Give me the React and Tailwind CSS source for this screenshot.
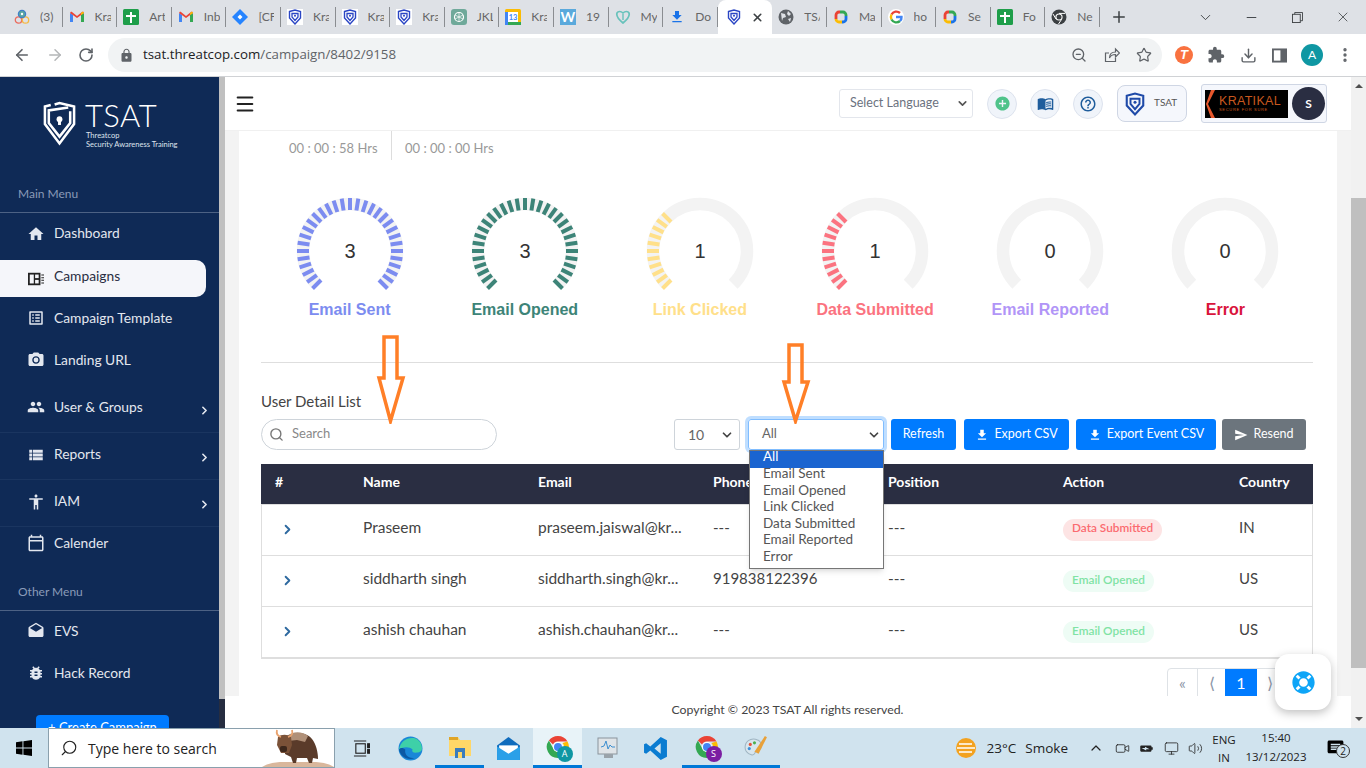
import React from 'react';
import { ArrowLeft, ArrowRight, RotateCw, ZoomOut, Star, Download, EllipsisVertical, Plus, X, ChevronDown, Minus, Search, ChevronRight, Volume2, Monitor, Video, ChevronUp, Menu } from 'lucide-react';
import { MdLock, MdExtension, MdHome, MdListAlt, MdPhotoCamera, MdPeople, MdViewList, MdAccessibility, MdOutlineCalendarToday, MdDrafts, MdBugReport, MdMenuBook, MdFileDownload, MdSend, MdAddCircle, MdOutlineHelpOutline, MdBatteryChargingFull, MdMessage } from 'react-icons/md';
import { FaLifeRing } from 'react-icons/fa';

const Gmail = () => (
  <svg viewBox="0 0 16 16" className="w-4 h-4">
    <path d="M1 13V4l3 2v7z" fill="#4285f4" />
    <path d="M15 13V4l-3 2v7z" fill="#34a853" />
    <path d="M1 4l7 5 7-5-1-1.500-1 .5-5 4-5-4-1-.5z" fill="#ea4335" />
    <path d="M12 6l3-2-1-1.500-2 1.500z" fill="#fbbc04" />
  </svg>
);
const Sheet = () => (
  <svg viewBox="0 0 16 16" className="w-4 h-4">
    <rect width="16" height="16" rx="1.500" fill="#1e9e4a" />
    <path d="M7 3h2v3h4v2H9v6H7V8H3V6h4z" fill="#fff" />
  </svg>
);
const Jira = () => (
  <svg viewBox="0 0 16 16" className="w-4 h-4">
    <path d="M8 0l8 8-8 8-8-8z" fill="#2684ff" />
    <path d="M8 5.500L10.500 8 8 10.500 5.500 8z" fill="#fff" />
  </svg>
);
const Shield = ({ color = '#2b46c4', cls = 'w-4 h-4' }) => (
  <svg viewBox="0 0 16 16" className={cls}>
    <path d="M2.500 2.500L8 1l5.500 1.500V9L8 15 2.500 9z" fill="none" stroke={color} strokeWidth="1.400" />
    <path d="M5 4.500h6V8l-3 3.500L5 8z" fill="none" stroke={color} strokeWidth="1.300" />
    <circle cx="8" cy="6.800" r="1" fill={color} />
  </svg>
);
const ShieldTab = () => (
  <div className="w-4 h-4 bg-white flex items-center justify-center"><Shield /></div>
);
const Robot = () => (
  <svg viewBox="0 0 16 16" className="w-4 h-4">
    <rect width="16" height="16" rx="3" fill="#6fa99a" />
    <circle cx="8" cy="8" r="4.500" fill="none" stroke="#fff" strokeWidth="1.200" />
    <path d="M8 3.500v9M4 6l8 4M12 6l-8 4" stroke="#fff" strokeWidth=".7" />
  </svg>
);
const Cal = () => (
  <svg viewBox="0 0 16 16" className="w-4 h-4">
    <rect width="16" height="16" rx="1.500" fill="#fbbc04" />
    <rect x="0" y="3" width="3" height="13" fill="#4285f4" />
    <rect x="3" y="3" width="10" height="10" fill="#fff" />
    <rect x="3" y="13" width="13" height="3" fill="#34a853" />
    <text x="8" y="11" fontSize="7.500" textAnchor="middle" fill="#4285f4" fontWeight="700">13</text>
  </svg>
);
const Word = () => (
  <div className="w-4 h-4 bg-[#5aa9dc] text-white text-[14px] leading-4 text-center font-bold">W</div>
);
const Green = () => (
  <svg viewBox="0 0 16 16" className="w-4 h-4">
    <path d="M8 14C3 10 1 7 2 4c1-2 4-2 6 0 2-2 5-2 6 0 1 3-1 6-6 10z" fill="none" stroke="#68c2bb" strokeWidth="1.700" />
    <path d="M8 11V5" stroke="#68c2bb" strokeWidth="1.400" />
  </svg>
);
const Dl = () => <MdFileDownload className="w-4 h-4 text-[#1a73e8]" />;
const Globe = () => (
  <svg viewBox="0 0 16 16" className="w-4 h-4">
    <circle cx="8" cy="8" r="7.500" fill="#5f6368" />
    <path d="M3 4l4 1 1 3-3 1-1 3zM10 2l3 3-2 2-2-2zM10 10l3-1-1 4z" fill="#dee1e6" />
  </svg>
);
const RingApp = () => (
  <svg viewBox="0 0 16 16" className="w-4 h-4" fill="none" strokeWidth="2.800">
    <path d="M3 10V6a3 3 0 0 1 3-3h1" stroke="#ea4335" />
    <path d="M7 3h3a3 3 0 0 1 3 3v1" stroke="#34a853" />
    <path d="M13 7v3a3 3 0 0 1-3 3H9" stroke="#1a73e8" />
    <path d="M9 13H6a3 3 0 0 1-3-3" stroke="#fbbc04" />
  </svg>
);
const GoogleG = () => (
  <div className="w-4 h-4 rounded-full bg-white flex items-center justify-center">
    <svg viewBox="0 0 16 16" className="w-4 h-4" fill="none" strokeWidth="2.400">
      <path d="M3.500 5.500A5.500 5.500 0 0 1 12 4" stroke="#ea4335" />
      <path d="M3.500 5.500a5.500 5.500 0 0 0 0 5" stroke="#fbbc04" />
      <path d="M3.500 10.500A5.500 5.500 0 0 0 12 12" stroke="#34a853" />
      <path d="M12 12a5 5 0 0 0 1.500-4H8" stroke="#4285f4" />
    </svg>
  </div>
);
const ChromeMono = () => (
  <svg viewBox="0 0 16 16" className="w-4 h-4">
    <circle cx="8" cy="8" r="7.500" fill="#3c4043" />
    <circle cx="8" cy="8" r="3.600" fill="#fff" />
    <circle cx="8" cy="8" r="2.500" fill="#3c4043" />
    <path d="M8 4.400h6M5 10L2 5M10.500 10.500L7.500 15" stroke="#fff" strokeWidth="1" />
  </svg>
);
const Hub = () => (
  <svg viewBox="0 0 16 16" className="w-4 h-4" fill="none" strokeWidth="1.300">
    <circle cx="4.500" cy="11" r="3.200" stroke="#ea6b5d" />
    <circle cx="11.500" cy="11" r="3.200" stroke="#f5b942" />
    <circle cx="8" cy="5" r="3.600" fill="#5aa7a0" stroke="#3f7fc9" />
    <circle cx="8" cy="5" r="1.200" fill="#fff" />
  </svg>
);

const tabs = [
  [Hub, '(3)'], [Gmail, 'Kra'], [Sheet, 'Art'], [Gmail, 'Inb'], [Jira, '[CF'],
  [ShieldTab, 'Kra'], [ShieldTab, 'Kra'], [ShieldTab, 'Kra'], [Robot, 'JKL'], [Cal, 'Kra'],
  [Word, '19'], [Green, 'My'], [Dl, 'Do'], null,
  [Globe, 'TS/'], [RingApp, 'Ma'], [GoogleG, 'ho'], [RingApp, 'Se'], [Sheet, 'Fo'], [ChromeMono, 'Ne'],
];

const TabStrip = () => (
  <div className="h-[34px] bg-[#dee1e6] flex items-center pl-[8px] text-[12px] text-[#666] shrink-0">
    {tabs.map((t, i) => {
      if (!t) {
        return (
          <div key={i} className="w-[54.6px] h-[34px] bg-white rounded-t-lg flex items-center pl-[8px] shrink-0">
            <Shield color="#2b46c4" />
            <X size={13} strokeWidth={3} className="ml-[9px] text-[#3c4043]" />
          </div>
        );
      }
      const [Icon, label] = t;
      return (
        <div key={i} className="w-[54.6px] h-[20px] flex items-center pl-[6px] border-r border-[#8a8d91] shrink-0 overflow-hidden">
          <div className="shrink-0"><Icon /></div>
          <span className="ml-[10px] w-[16px] overflow-hidden whitespace-nowrap">{label}</span>
        </div>
      );
    })}
    <Plus size={18} strokeWidth={2} className="ml-[10px] text-[#3c4043] shrink-0" />
    <div className="ml-auto flex h-full text-[#3c4043]">
      <div className="w-[46px] flex items-center justify-center"><ChevronDown size={17} strokeWidth={1.300} /></div>
      <div className="w-[46px] flex items-center justify-center"><Minus size={15} strokeWidth={1.500} /></div>
      <div className="w-[46px] flex items-center justify-center">
        <svg viewBox="0 0 12 12" className="w-[11px] h-[11px]" fill="none" stroke="currentColor"><rect x=".5" y="2.500" width="8.500" height="9" /><path d="M3 2.500V.5h8.500v9H9" /></svg>
      </div>
      <div className="w-[46px] flex items-center justify-center"><X size={16} strokeWidth={1.200} /></div>
    </div>
  </div>
);

const AddressBar = () => (
  <div className="h-[43px] bg-white flex items-center border-b border-[#d0d2d5] text-[#5f6368] shrink-0">
    <ArrowLeft size={18} strokeWidth={2.200} className="ml-[13px]" />
    <ArrowRight size={18} strokeWidth={2} className="ml-[15px] text-[#b4b6b8]" />
    <RotateCw size={16} strokeWidth={2.400} className="ml-[14px]" />
    <div className="ml-[14px] w-[1054px] h-[34px] rounded-full bg-[#f1f3f4] flex items-center pl-[11px] pr-[10px]">
      <MdLock size={15} />
      <span className="ml-[9px] text-[13.300px] [font-family:'Open_Sans',sans-serif] text-[#5f6368]"><span className="text-[#202124]">tsat.threatcop.com</span>/campaign/8402/9158</span>
      <ZoomOut size={16} className="ml-auto mr-[17px]" />
      <svg viewBox="0 0 16 16" className="w-4 h-4 mr-[16px]" fill="none" stroke="currentColor" strokeWidth="1.200"><path d="M5 6H1.500v8.500h10V11" /><path d="M5.500 11c0-4 2.500-6 6-6V2l4 4-4 4V7.500c-3 0-5 1-6 3.500z" /></svg>
      <Star size={16} strokeWidth={1.800} />
    </div>
    <div className="ml-[13px] w-[18px] h-[18px] rounded-full bg-[#f97240] text-white text-[13px] leading-[18px] text-center font-bold italic [font-family:'Liberation_Sans',sans-serif]">T</div>
    <MdExtension size={18} className="ml-[14px]" />
    <Download size={17} strokeWidth={2} className="ml-[15px]" />
    <svg viewBox="0 0 16 16" className="w-[15px] h-[15px] ml-[15px]"><rect x="1" y="1.500" width="14" height="13" fill="none" stroke="#5f6368" strokeWidth="2" /><rect x="9" y="1.500" width="6" height="13" fill="#5f6368" /></svg>
    <div className="ml-[14px] w-[22px] h-[22px] rounded-full bg-[#0f97a3] text-white text-[12px] leading-[22px] text-center">A</div>
    <EllipsisVertical size={18} strokeWidth={2.500} className="ml-[13px]" />
  </div>
);

const menuCls = 'flex items-center pl-[27px] text-[#e3e7ef] shrink-0';

const MenuItem = ({ icon: Icon, label, cls, arrow }) => (
  <div className={`${menuCls} ${cls}`}>
    <Icon size={18} className="w-[18px] shrink-0" />
    <span className="ml-[9px]">{label}</span>
    {arrow && <ChevronRight size={13} strokeWidth={3} className="ml-auto mr-[8px] mt-[6px]" />}
  </div>
);

const CampaignIcon = () => (
  <svg viewBox="0 0 18 14" className="w-[16px] h-[14px] ml-[1px]">
    <rect x="0" y="0" width="14" height="14" fill="#222" />
    <rect x="2" y="2" width="4.500" height="10" fill="#f5f6fa" />
    <rect x="8" y="2" width="4" height="4" fill="#f5f6fa" />
    <rect x="8" y="8" width="4" height="4" fill="#f5f6fa" />
    <path d="M15 2.500h3M15 5.500h3M15 8.500h3M15 11.500h3" stroke="#222" strokeWidth="1.200" />
  </svg>
);

const Sidebar = () => (
  <div className="w-[219px] h-full bg-[#0f2a56] overflow-hidden shrink-0 text-[13.800px] flex flex-col">
    <div className="h-[100px] shrink-0 flex pl-[42px] pt-[24px]">
      <svg viewBox="0 0 36 46" className="w-[35px] h-[46px]" fill="none" stroke="#fff">
        <path d="M13 3L18 1.500 33 5v18L18 43 3 23V5l6-1.500" strokeWidth="2.600" />
        <path d="M29 10v12L18 36 7 22V9l20-3" strokeWidth="2.600" />
        <circle cx="18" cy="18" r="3" fill="#fff" stroke="none" />
        <rect x="16.500" y="19" width="3" height="5" fill="#fff" stroke="none" />
      </svg>
      <div className="ml-[8px] text-white">
        <div className="text-[31px] leading-[30px] font-light tracking-[0.5px] -mt-[1px]">TSAT</div>
        <div className="text-[7.500px] leading-[8.500px] text-[#dfe4ee] mt-[2px] ml-[1px]">Threatcop</div>
        <div className="text-[7.500px] leading-[8.500px] text-[#dfe4ee] ml-[1px] whitespace-nowrap">Security Awareness Training</div>
      </div>
    </div>
    <div className="h-[36px] shrink-0 border-b border-[#4d6284] pl-[18px] pt-[8px] text-[12px] text-[#8a9bb8]">Main Menu</div>
    <MenuItem icon={MdHome} label="Dashboard" cls="h-[41px]" />
    <div className="mt-[6px] h-[37px] bg-[#f5f6fa] rounded-r-[10px] w-[206px] flex items-center pl-[27px] text-[#2a2e42] shrink-0">
      <CampaignIcon />
      <span className="ml-[10px] -mt-[4px]">Campaigns</span>
    </div>
    <MenuItem icon={MdListAlt} label="Campaign Template" cls="h-[42px]" />
    <MenuItem icon={MdPhotoCamera} label="Landing URL" cls="h-[42px]" />
    <MenuItem icon={MdPeople} label="User & Groups" cls="h-[52px] border-b border-[#1a3560] pt-[1px]" arrow />
    <MenuItem icon={MdViewList} label="Reports" cls="h-[47px] border-b border-[#1a3560] pb-[3px]" arrow />
    <MenuItem icon={MdAccessibility} label="IAM" cls="h-[47px] border-b border-[#1a3560] pb-[3px]" arrow />
    <MenuItem icon={MdOutlineCalendarToday} label="Calender" cls="h-[34px] pb-[2px]" />
    <div className="h-[50px] shrink-0 border-b border-[#4d6284] pl-[18px] pt-[22px] text-[12px] text-[#8a9bb8]">Other Menu</div>
    <MenuItem icon={MdDrafts} label="EVS" cls="h-[42px] pb-[2px]" />
    <MenuItem icon={MdBugReport} label="Hack Record" cls="h-[42px] pb-[2px]" />
    <div className="mt-[20px] ml-[36px] w-[133px] h-[36px] shrink-0 bg-[#007bff] rounded-t text-white text-center pt-[3px] leading-[18px] text-[13px]">+ Create Campaign</div>
  </div>
);

const Gauge = ({ value, label, color, filled }) => {
  const ticks = [];
  for (let i = 0; i < filled; i++) {
    const a = ((-135 + i * 9) * Math.PI) / 180;
    const s = Math.sin(a);
    const c = Math.cos(a);
    ticks.push(<line key={i} x1={60 + 41 * s} y1={60 - 41 * c} x2={60 + 53 * s} y2={60 - 53 * c} stroke={color} strokeWidth="4" />);
  }
  return (
    <div className="flex flex-col items-center [font-family:'Liberation_Sans',sans-serif]">
      <svg viewBox="0 0 120 104" className="w-[120px] h-[104px]">
        <path d="M26.77 93.23 A47 47 0 1 1 93.23 93.23" fill="none" stroke="#f3f3f3" strokeWidth="12.500" />
        {ticks}
        <text x="60" y="67" textAnchor="middle" fontSize="20" fill="#333">{value}</text>
      </svg>
      <div className="mt-[3px] text-[16px] leading-[24px] font-bold whitespace-nowrap" style={{ color }}>{label}</div>
    </div>
  );
};

const gauges = [
  { value: 3, label: 'Email Sent', color: '#7c8cf0', filled: 31 },
  { value: 3, label: 'Email Opened', color: '#3d8478', filled: 31 },
  { value: 1, label: 'Link Clicked', color: '#ffe08a', filled: 11 },
  { value: 1, label: 'Data Submitted', color: '#fb7380', filled: 11 },
  { value: 0, label: 'Email Reported', color: '#b195f7', filled: 0 },
  { value: 0, label: 'Error', color: '#d9143c', filled: 0 },
];

const rows = [
  { name: 'Praseem', email: 'praseem.jaiswal@kr...', phone: '---', action: 'Data Submitted', country: 'IN' },
  { name: 'siddharth singh', email: 'siddharth.singh@kr...', phone: '919838122396', action: 'Email Opened', country: 'US' },
  { name: 'ashish chauhan', email: 'ashish.chauhan@kr...', phone: '---', action: 'Email Opened', country: 'US' },
];

const gridCols = 'grid grid-cols-[88px_175px_175px_175px_175px_176px_88px]';
const options = ['Email Sent', 'Email Opened', 'Link Clicked', 'Data Submitted', 'Email Reported', 'Error'];

const Btn = ({ icon: Icon, label, cls }) => (
  <div className={`h-[31px] rounded-[3px] text-white text-[12.500px] flex items-center justify-center shrink-0 ${cls}`}>
    {Icon && <Icon size={14} className="mr-[5px]" />}
    {label}
  </div>
);

const Toolbar = () => (
  <div className="mt-[8px] flex items-center pr-[7px] text-[13px]">
    <div className="w-[236px] h-[31px] border border-[#ced4da] rounded-full flex items-center pl-[7px] text-[#888]">
      <Search size={15} strokeWidth={2.200} className="text-[#777]" />
      <span className="ml-[8px] pb-[1px]">Search</span>
    </div>
    <div className="ml-auto w-[66px] h-[31px] border border-[#ced4da] rounded-[3px] flex items-center justify-between pl-[13px] pr-[5px] text-[#666] text-[14px]">
      10
      <ChevronDown size={14} strokeWidth={3} className="text-[#444]" />
    </div>
    <div className="relative ml-[8px] w-[136px] h-[31px] border border-[#80bdff] ring-[3px] ring-[#bfdeff] rounded-[3px] flex items-center justify-between pl-[13px] pr-[2px] text-[#666]">
      <span className="pb-[1px]">All</span>
      <ChevronDown size={14} strokeWidth={3} className="text-[#444]" />
      <div className="absolute z-20 left-0 top-[30px] w-[135px] h-[119px] bg-white border border-[#767676] shadow-md text-[13.500px] leading-[16.600px] text-[#555]">
        <div className="bg-[#1a64d0] text-white pl-[13px] h-[17px] leading-[10px]">All</div>
        <div className="-mt-[3px]">
          {options.map((o) => <div key={o} className="pl-[13px]">{o}</div>)}
        </div>
      </div>
    </div>
    <Btn label="Refresh" cls="ml-[7px] w-[65px] bg-[#007bff]" />
    <Btn icon={MdFileDownload} label="Export CSV" cls="ml-[8px] w-[105px] bg-[#007bff]" />
    <Btn icon={MdFileDownload} label="Export Event CSV" cls="ml-[7px] w-[140px] bg-[#007bff]" />
    <Btn icon={MdSend} label="Resend" cls="ml-[6px] w-[84px] bg-[#6c757d]" />
  </div>
);

const UserTable = () => (
  <div className="mt-[14px] border-x border-b-2 border-[#dedede] text-[15.500px] text-[#444]">
    <div className={`${gridCols} -mx-px h-[41px] bg-[#2a2e42] text-white text-[14px] font-bold items-center border-b border-[#dedede]`}>
      {['#', 'Name', 'Email', 'Phone', 'Position', 'Action', 'Country'].map((h) => (
        <div key={h} className="pl-[14px] pb-[5px]">{h}</div>
      ))}
    </div>
    {rows.map((r, i) => (
      <div key={r.name} className={`${gridCols} -mx-px items-center ${i < 2 ? 'h-[51px] border-b border-[#dedede]' : 'h-[50px]'}`}>
        <div className="pl-[19px] pb-[2px]"><ChevronRight size={15} strokeWidth={3} className="text-[#2f6aa0]" /></div>
        <div className="pl-[14px] pb-[5px]">{r.name}</div>
        <div className="pl-[14px] pb-[5px] whitespace-nowrap">{r.email}</div>
        <div className="pl-[14px] pb-[5px] text-[15px]">{r.phone}</div>
        <div className="pl-[14px] pb-[5px]">---</div>
        <div className="pl-[14px] pb-[4px]">
          {r.action === 'Data Submitted'
            ? <span className="inline-block h-[22px] px-[9px] rounded-full bg-[#fde4e4] text-[#fb6b70] text-[11.800px] font-semibold leading-[18px]">{r.action}</span>
            : <span className="inline-block h-[22px] px-[9px] rounded-full bg-[#eefcf5] text-[#7fe3a4] text-[11.800px] font-semibold leading-[20px]">{r.action}</span>}
        </div>
        <div className="pl-[14px] pb-[5px] text-[15px]">{r.country}</div>
      </div>
    ))}
  </div>
);

const Pager = () => (
  <div className="mt-[9px] flex justify-end pr-[29px] h-[38px] text-[#8a94a6]">
    <div className="flex h-[38px] border border-[#dee2e6] rounded-l">
      <div className="w-[30px] flex items-center justify-center border-r border-[#dee2e6] pb-[8px]">«</div>
      <div className="w-[27px] flex items-center justify-center pb-[8px]">⟨</div>
      <div className="w-[32px] bg-[#007bff] text-white text-[16px] flex items-center justify-center pb-[8px]">1</div>
      <div className="w-[26px] flex items-center justify-center pb-[8px]">⟩</div>
    </div>
  </div>
);

const Main = () => (
  <div className="relative w-[1126px] h-full flex flex-col shrink-0 bg-white text-[#444]">
    <div className="h-[54px] shrink-0 bg-white border-b border-[#f0f0f0] flex items-center pl-[9px] pr-[24px]">
      <Menu size={22} strokeWidth={2.200} className="text-[#222]" />
      <div className="ml-auto w-[134px] h-[29px] border border-[#e3e6ec] rounded-[3px] flex items-center justify-between pl-[10px] pr-[3px] text-[12.500px] text-[#6b7280]">
        Select Language
        <ChevronDown size={13} strokeWidth={3} className="text-[#555]" />
      </div>
      <div className="ml-[14px] w-[30px] h-[30px] rounded-full bg-[#f0f4fa] border border-[#dde3ee] flex items-center justify-center"><MdAddCircle size={17} className="text-[#4fc38a]" /></div>
      <div className="ml-[13px] w-[30px] h-[30px] rounded-full bg-[#f0f4fa] border border-[#dde3ee] flex items-center justify-center"><MdMenuBook size={17} className="text-[#1f5d9c]" /></div>
      <div className="ml-[13px] w-[30px] h-[30px] rounded-full bg-[#f0f4fa] border border-[#dde3ee] flex items-center justify-center"><MdOutlineHelpOutline size={18} className="text-[#1f5d9c]" /></div>
      <div className="ml-[14px] w-[70px] h-[37px] rounded-lg bg-[#f5f7fc] border border-[#cfd6e4] flex items-center pl-[5px] text-[10px] text-[#555]">
        <Shield color="#1f4aa8" cls="w-[24px] h-[28px]" />
        <span className="ml-[7px] -mt-[3px]">TSAT</span>
      </div>
      <div className="ml-[14px] w-[126px] h-[39px] rounded-[3px] bg-[#f5f7fc] border border-[#cfd6e4] flex items-center pl-[3px]">
        <div className="w-[83px] h-[28px] bg-black flex items-center overflow-hidden">
          <svg viewBox="0 0 10 28" className="w-[10px] h-[28px] ml-[1px] shrink-0"><path d="M9 0L2 14l7 14H5L0 14 5 0z" fill="#e8572c" /></svg>
          <div className="ml-[3px] [font-family:'Liberation_Sans',sans-serif] text-[#c9581f] leading-none">
            <div className="text-[12.500px] tracking-[0.3px]">KRATIKAL</div>
            <div className="text-[4px] tracking-[0.7px] mt-[1px] whitespace-nowrap">SECURE FOR SURE</div>
          </div>
        </div>
        <div className="ml-[4px] w-[33px] h-[33px] rounded-full bg-[#2a2e42] text-white text-[12px] font-bold flex items-center justify-center">S</div>
      </div>
    </div>
    <div className="h-[565px] shrink-0 overflow-hidden bg-[#f3f3f3] px-[14px]">
      <div className="bg-white h-full pl-[22px] pr-[24px]">
        <div className="h-[29px] flex text-[13px] text-[#999]">
          <div className="w-[131px] pl-[28px] border-r border-[#ddd] whitespace-nowrap pt-[5px] leading-[24px]">00 : 00 : 58 Hrs</div>
          <div className="pl-[13px] whitespace-nowrap pt-[5px] leading-[24px]">00 : 00 : 00 Hrs</div>
        </div>
        <div className="mt-[31px] grid grid-cols-6 pl-[1px]">
          {gauges.map((g) => <Gauge key={g.label} {...g} />)}
        </div>
        <div className="mt-[40px] border-t border-[#dedede]" />
        <div className="mt-[28px] h-[20px] leading-[20px] text-[15px] text-[#444]">User Detail List</div>
        <Toolbar />
        <UserTable />
        <Pager />
      </div>
    </div>
    <div className="flex-1 bg-white flex items-center justify-center text-[12.300px] text-[#444] pb-[4px] pr-[1px]">Copyright © 2023 TSAT All rights reserved.</div>

    <svg viewBox="0 0 30 90" className="absolute z-30 left-[151px] top-[257px] w-[30px] h-[90px]" fill="none" stroke="#ff7f27" strokeWidth="3.500">
      <path d="M8 3h13v41h6L14.500 87 3 44h5z" />
    </svg>
    <svg viewBox="0 0 30 82" className="absolute z-30 left-[556px] top-[265px] w-[30px] h-[82px]" fill="none" stroke="#ff7f27" strokeWidth="3.500">
      <path d="M8 3h13v37h6L14.500 79 3 40h5z" />
    </svg>
    <div className="absolute z-30 left-[1050px] top-[577px] w-[56px] h-[56px] bg-white rounded-[14px] shadow-[0_3px_10px_rgba(0,0,0,0.25)] flex items-center justify-center">
      <FaLifeRing size={23} className="text-[#0ea5f7]" />
    </div>
  </div>
);

const PageScroll = () => (
  <div className="w-[15px] h-full bg-[#f1f1f1] flex flex-col items-center shrink-0">
    <div className="h-[121px] w-full flex justify-center pt-[7px]">
      <div className="w-0 h-0 border-x-[4px] border-x-transparent border-b-[4px] border-b-[#505050]" />
    </div>
    <div className="w-full h-[470px] bg-[#bfbfbf]" />
    <div className="flex-1" />
    <div className="w-0 h-0 border-x-[4px] border-x-transparent border-t-[4px] border-t-[#505050] mb-[7px]" />
  </div>
);

const Chrome = ({ badge, badgeColor }) => (
  <div className="relative w-[24px] h-[24px]">
    <svg viewBox="0 0 24 24" className="w-[24px] h-[24px]">
      <path d="M12 1a11 11 0 0 1 9.500 5.500H12A5.500 5.500 0 0 0 7 9.500L2.900 5.500A11 11 0 0 1 12 1z" fill="#ea4335" />
      <path d="M21.500 6.500A11 11 0 0 1 12 23l4.800-8.200A5.500 5.500 0 0 0 16.500 8z" fill="#fbbc04" />
      <path d="M12 23A11 11 0 0 1 2.900 5.500L7.500 14A5.500 5.500 0 0 0 16.800 14.800z" fill="#34a853" />
      <circle cx="12" cy="12" r="5" fill="#fff" />
      <circle cx="12" cy="12" r="4" fill="#4285f4" />
    </svg>
    <div className={`absolute -right-[3px] -bottom-[3px] w-[16px] h-[16px] rounded-full text-white text-[9px] leading-[16px] text-center ${badgeColor}`}>{badge}</div>
  </div>
);

const Yak = () => (
  <svg viewBox="0 0 72 40" className="w-[72px] h-[40px] absolute right-0 bottom-0">
    <path d="M0 40c6-4 14-5 22-5h28c8 0 16 1 22 5z" fill="#d9b79c" />
    <path d="M24 10c8-6 20-5 26 2 4 5 6 13 6 20l-5-1-1 5h-3l-2-5-10 0-1 5h-3l-2-6-6-3z" fill="#5a3b2a" />
    <path d="M25 9c6-5 15-5 21 0l-3 6-8-2-9 1z" fill="#b09078" />
    <path d="M16 10c3-3 10-3 13 0l1 8-3 8h-8l-4-8z" fill="#7b5238" />
    <rect x="18" y="19" width="7" height="6" rx="2" fill="#3d281c" />
    <path d="M15 3c-1 4 0 6 4 7M30 3c1 4 0 6-4 7" stroke="#e9a36f" strokeWidth="1.800" fill="none" />
  </svg>
);

const TaskIcon = ({ children, cls = '' }) => (
  <div className={`w-[49px] h-full flex items-center justify-center shrink-0 ${cls}`}>{children}</div>
);

const Taskbar = () => (
  <div className="h-[40px] bg-[#d0e3ee] flex items-center text-[#222] [font-family:'Open_Sans',sans-serif] shrink-0 overflow-hidden">
    <div className="w-[48px] flex justify-center shrink-0">
      <svg viewBox="0 0 16 16" className="w-[16px] h-[16px]" fill="#000"><path d="M0 2.300l6.500-1v6.300H0zM7.400 1.200L16 0v7.600H7.400zM0 8.400h6.500v6.300l-6.500-1zM7.400 8.400H16V16l-8.600-1.200z" /></svg>
    </div>
    <div className="relative w-[287px] h-[40px] bg-white border border-[#8aa0ad] flex items-center pl-[11px] text-[14px] shrink-0">
      <Search size={18} strokeWidth={1.500} className="-scale-x-100" />
      <span className="ml-[10px]">Type here to search</span>
      <Yak />
    </div>
    <div className="ml-[2px] flex h-full">
      <TaskIcon>
        <svg viewBox="0 0 18 18" className="w-[17px] h-[17px]" fill="none" stroke="#222" strokeWidth="1.200"><rect x="3" y="4" width="10" height="10" /><path d="M1 1h13M1 17h13" /><rect x="15.500" y="4" width="2" height="4" fill="#222" /><rect x="15.500" y="10" width="2" height="4" fill="#222" /></svg>
      </TaskIcon>
      <TaskIcon>
        <svg viewBox="0 0 24 24" className="w-[25px] h-[25px]"><circle cx="12" cy="12" r="11.500" fill="#1a87d8" /><path d="M1 13C2 5 9 1 15 2c5 1 8 5 8 10 0 3-3 4-6 4-3 0-4-1-3-3-3-3-9-3-13 0z" fill="#3ed0a8" /><path d="M7 13c-1 5 3 9 9 8-6 3-14-1-15-8 1-2 4-2 6 0z" fill="#0c59a4" /></svg>
      </TaskIcon>
      <TaskIcon cls="border-b-[3px] border-[#0078d7]">
        <svg viewBox="0 0 24 22" className="w-[24px] h-[22px]"><path d="M1 1h9l2 3h11v16H1z" fill="#ffd768" /><rect x="1" y="1" width="9" height="3" fill="#e0a526" /><rect x="7" y="12" width="10" height="10" fill="#3a7cbd" /><rect x="10" y="16" width="4" height="6" fill="#ffd768" /></svg>
      </TaskIcon>
      <TaskIcon>
        <svg viewBox="0 0 24 24" className="w-[25px] h-[25px]"><path d="M1 9l11-8 11 8v14H1z" fill="#0f6cbd" /><path d="M3 9h18v9H3z" fill="#fff" /><path d="M1 10l11 7 11-7v13H1z" fill="#2ba0e8" /></svg>
      </TaskIcon>
      <TaskIcon cls="bg-[#e8f3f8] border-b-[3px] border-[#0078d7]"><Chrome badge="A" badgeColor="bg-[#0f97a3]" /></TaskIcon>
      <TaskIcon>
        <svg viewBox="0 0 24 24" className="w-[24px] h-[24px]"><rect x="3" y="2" width="19" height="16" fill="#dfe4e8" stroke="#8a949b" /><path d="M6 11l3-1 2-5 2 8 2-4 2 2h3" stroke="#3b8ed0" fill="none" /><rect x="9" y="18" width="9" height="4" fill="#9aa3aa" /></svg>
      </TaskIcon>
      <TaskIcon>
        <svg viewBox="0 0 24 24" className="w-[25px] h-[25px]"><path d="M17 1l6 3v16l-6 3L7 14l-4 3-2-1V8l2-1 4 3zM17 7l-6 5 6 5z" fill="#0a7cd1" /></svg>
      </TaskIcon>
      <div className="w-[2px]" />
      <TaskIcon cls="border-b-[3px] border-[#0078d7]"><Chrome badge="S" badgeColor="bg-[#7b1fa2]" /></TaskIcon>
      <TaskIcon cls="border-b-[3px] border-[#0078d7]">
        <svg viewBox="0 0 24 24" className="w-[25px] h-[25px]"><path d="M2 13C2 7 7 4 12 5c5 1 7 5 5 9-1 2-4 1-5 3s-1 4-4 3c-3-1-6-3-6-7z" fill="#d8e6ee" stroke="#9fb5c2" /><circle cx="7" cy="10" r="1.500" fill="#e5533d" /><circle cx="11" cy="8.500" r="1.500" fill="#4caf50" /><circle cx="6" cy="14" r="1.500" fill="#3f8fd8" /><path d="M11 17L21 2l2 1-8 16z" fill="#e8a13a" /></svg>
      </TaskIcon>
    </div>
    <div className="ml-auto flex items-center h-full">
      <svg viewBox="0 0 20 20" className="w-[20px] h-[20px]"><circle cx="10" cy="10" r="10" fill="#f3a21f" /><path d="M3 6h13M1 10h18M3 14h13" stroke="#fff" strokeWidth="1.300" /></svg>
      <span className="ml-[11px] text-[13.500px] whitespace-nowrap">23°C</span>
      <span className="ml-[9px] mr-[20px] text-[13.500px] whitespace-nowrap">Smoke</span>
      <ChevronUp size={16} strokeWidth={1.800} />
      <Video size={15} strokeWidth={1.300} className="ml-[11px]" />
      <MdBatteryChargingFull size={15} className="ml-[9px] rotate-90" />
      <Monitor size={15} strokeWidth={1.300} className="ml-[10px]" />
      <Volume2 size={15} strokeWidth={1.300} className="ml-[9px]" />
      <div className="ml-[6px] w-[30px] text-center text-[11.500px] leading-[18px] mt-[1px]">ENG<br />IN</div>
      <div className="ml-[1px] w-[72px] text-center text-[11.500px] leading-[19px] -mt-[2px]">15:40<br />13/12/2023</div>
      <div className="relative w-[40px] ml-[3px] mr-[11px] flex justify-center">
        <MdMessage size={19} className="text-black -scale-x-100" />
        <div className="absolute right-[5px] top-[5px] w-[14px] h-[14px] rounded-full bg-[#d0e3ee] border border-[#333] text-[10px] leading-[12px] text-center">2</div>
      </div>
    </div>
  </div>
);

export default function App() {
  return (
    <div className="w-[1366px] h-[768px] overflow-hidden flex flex-col [font-family:Lato,sans-serif]">
      <TabStrip />
      <AddressBar />
      <div className="h-[651px] flex shrink-0">
        <Sidebar />
        <div className="w-[6px] h-full bg-[#262d40] shrink-0">
          <div className="h-[622px] bg-[#c0c0c0]" />
        </div>
        <Main />
        <PageScroll />
      </div>
      <Taskbar />
    </div>
  );
}
